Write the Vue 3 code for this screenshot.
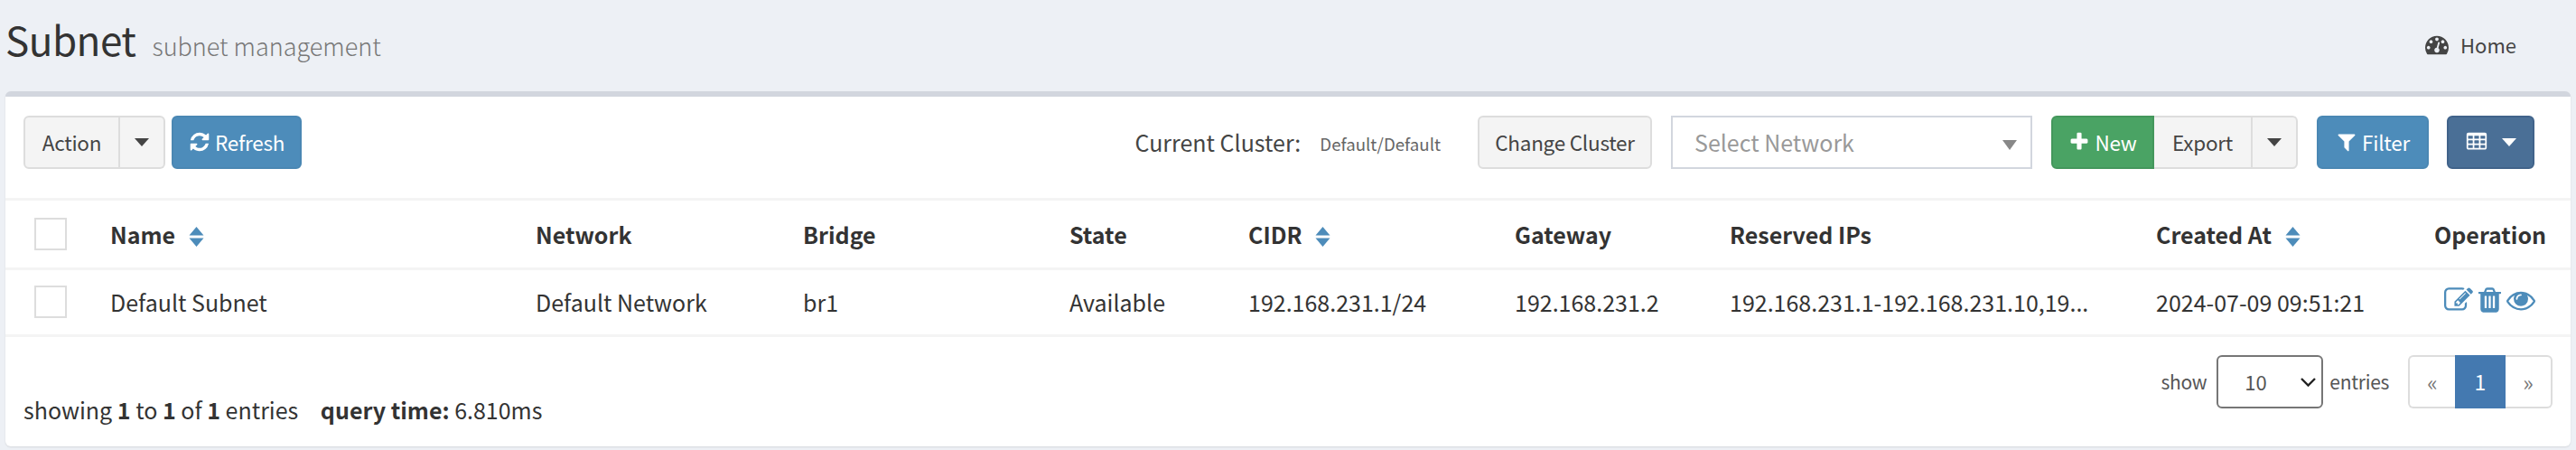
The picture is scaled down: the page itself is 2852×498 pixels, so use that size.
<script setup>
const icons = {
  refresh: 'M1639 1056q0 5-1 7-64 268-268 434.5t-478 166.5q-146 0-282.500-55t-243.500-157l-129 129q-19 19-45 19t-45-19-19-45v-448q0-26 19-45t45-19h448q26 0 45 19t19 45-19 45l-137 137q71 66 161 102t187 36q134 0 250-65t186-179q11-17 53-117 8-23 30-23h192q13 0 22.500 9.500t9.500 22.500zm25-800v448q0 26-19 45t-45 19h-448q-26 0-45-19t-19-45 19-45l138-138q-148-137-349-137-134 0-250 65t-186 179q-11 17-53 117-8 23-30 23h-199q-13 0-22.500-9.500t-9.500-22.500v-7q65-268 270-434.500t480-166.500q146 0 284 55.500t245 156.500l130-129q19-19 45-19t45 19 19 45z',
  plus: 'M1600 736v192q0 40-28 68t-68 28h-416v416q0 40-28 68t-68 28h-192q-40 0-68-28t-28-68v-416h-416q-40 0-68-28t-28-68v-192q0-40 28-68t68-28h416v-416q0-40 28-68t68-28h192q40 0 68 28t28 68v416h416q40 0 68 28t28 68z',
  filter: 'M1595 295q17 41-14 70l-493 493v742q0 42-39 59-13 5-25 5-27 0-45-19l-256-256q-19-19-19-45v-486l-493-493q-31-29-14-70 17-39 59-39h1280q42 0 59 39z',
  table: 'M576 1376v-192q0-14-9-23t-23-9h-320q-14 0-23 9t-9 23v192q0 14 9 23t23 9h320q14 0 23-9t9-23zm0-384v-192q0-14-9-23t-23-9h-320q-14 0-23 9t-9 23v192q0 14 9 23t23 9h320q14 0 23-9t9-23zm512 384v-192q0-14-9-23t-23-9h-320q-14 0-23 9t-9 23v192q0 14 9 23t23 9h320q14 0 23-9t9-23zm-512-768v-192q0-14-9-23t-23-9h-320q-14 0-23 9t-9 23v192q0 14 9 23t23 9h320q14 0 23-9t9-23zm512 384v-192q0-14-9-23t-23-9h-320q-14 0-23 9t-9 23v192q0 14 9 23t23 9h320q14 0 23-9t9-23zm512 384v-192q0-14-9-23t-23-9h-320q-14 0-23 9t-9 23v192q0 14 9 23t23 9h320q14 0 23-9t9-23zm-512-768v-192q0-14-9-23t-23-9h-320q-14 0-23 9t-9 23v192q0 14 9 23t23 9h320q14 0 23-9t9-23zm512 384v-192q0-14-9-23t-23-9h-320q-14 0-23 9t-9 23v192q0 14 9 23t23 9h320q14 0 23-9t9-23zm0-384v-192q0-14-9-23t-23-9h-320q-14 0-23 9t-9 23v192q0 14 9 23t23 9h320q14 0 23-9t9-23zm128-320v1088q0 66-47 113t-113 47h-1344q-66 0-113-47t-47-113v-1088q0-66 47-113t113-47h1344q66 0 113 47t47 113z',
  trash: 'M704 1376v-704q0-14-9-23t-23-9h-64q-14 0-23 9t-9 23v704q0 14 9 23t23 9h64q14 0 23-9t9-23zm256 0v-704q0-14-9-23t-23-9h-64q-14 0-23 9t-9 23v704q0 14 9 23t23 9h64q14 0 23-9t9-23zm256 0v-704q0-14-9-23t-23-9h-64q-14 0-23 9t-9 23v704q0 14 9 23t23 9h64q14 0 23-9t9-23zm-544-992h448l-48-117q-7-9-17-11h-317q-10 2-17 11zm928 32v64q0 14-9 23t-23 9h-96v948q0 83-47 143.500t-113 60.500h-832q-66 0-113-58.500t-47-141.500v-952h-96q-14 0-23-9t-9-23v-64q0-14 9-23t23-9h309l70-167q15-37 54-63t79-26h320q40 0 79 26t54 63l70 167h309q14 0 23 9t9 23z',
  eye: 'M1664 960q-152-236-381-353 61 104 61 225 0 185-131.500 316.500t-316.500 131.500-316.500-131.500-131.500-316.500q0-121 61-225-229 117-381 353 133 205 333.500 326.500t434.500 121.500 434.500-121.500 333.500-326.500zm-720-384q0-20-14-34t-34-14q-125 0-214.500 89.500t-89.500 214.500q0 20 14 34t34 14 34-14 14-34q0-86 61-147t147-61q20 0 34-14t14-34zm848 384q0 34-20 69-140 230-376.500 368.500t-499.500 138.500-499.500-139-376.500-368q-20-35-20-69t20-69q140-229 376.500-368t499.500-139 499.500 139 376.500 368q20 35 20 69z',
  edit: 'M888 1184l116-116-152-152-116 116v56h96v96h56zm440-720q-16-16-33 1l-350 350q-17 17-1 33t33-1l350-350q17-17 1-33zm80 594v190q0 119-84.500 203.500t-203.500 84.500h-832q-119 0-203.500-84.500t-84.500-203.500v-832q0-119 84.500-203.500t203.500-84.500h832q63 0 117 25 15 7 18 23 3 17-9 29l-49 49q-14 14-32 8-23-6-45-6h-832q-66 0-113 47t-47 113v832q0 66 47 113t113 47h832q66 0 113-47t47-113v-126q0-13 9-22l64-64q15-15 35-7t20 29zm-96-738l288 288-672 672h-288v-288zm444 132l-92 92-288-288 92-92q28-28 68-28t68 28l152 152q28 28 28 68t-28 68z',
  dashboard: 'M384 1152q0-53-37.500-90.500t-90.500-37.500-90.500 37.500-37.500 90.500 37.500 90.500 90.500 37.500 90.500-37.500 37.500-90.500zm192-448q0-53-37.500-90.500t-90.500-37.500-90.500 37.500-37.500 90.500 37.500 90.500 90.500 37.500 90.500-37.500 37.500-90.500zm428 481l101-382q6-26-7.500-48.500t-38.500-29.500-48 6.500-30 39.500l-101 382q-60 5-107 43.500t-63 98.500q-20 77 20 146t117 89 146-20 89-117q16-60-6-117t-72-91zm660-33q0-53-37.500-90.500t-90.500-37.500-90.500 37.500-37.500 90.500 37.500 90.500 90.500 37.500 90.500-37.500 37.500-90.500zm-640-640q0-53-37.500-90.500t-90.500-37.500-90.500 37.500-37.500 90.500 37.500 90.500 90.500 37.500 90.500-37.500 37.500-90.500zm448 192q0-53-37.500-90.500t-90.500-37.500-90.500 37.500-37.500 90.500 37.500 90.500 90.500 37.500 90.500-37.500 37.500-90.500zm320 448q0 261-141 483-19 29-54 29h-1402q-35 0-54-29-141-221-141-483 0-182 71-348t191-286 286-191 348-71 348 71 286 191 191 286 71 348z'
}

const columns = [
  { label: 'Name', width: 471, sort: true },
  { label: 'Network', width: 296 },
  { label: 'Bridge', width: 295 },
  { label: 'State', width: 198 },
  { label: 'CIDR', width: 295, sort: true },
  { label: 'Gateway', width: 238 },
  { label: 'Reserved IPs', width: 472 },
  { label: 'Created At', width: 308, sort: true },
  { label: 'Operation', width: 167 }
]

const rows = [
  ['Default Subnet', 'Default Network', 'br1', 'Available', '192.168.231.1/24', '192.168.231.2', '192.168.231.1-192.168.231.10,19...', '2024-07-09 09:51:21']
]
</script>

<template>
  <div class="page">
    <header class="page-head">
      <div class="titles">
        <h1>Subnet</h1>
        <small>subnet management</small>
      </div>
      <a class="crumb">
        <svg class="ico" viewBox="0 0 1792 1792" width="26" height="26"><path fill="currentColor" :d="icons.dashboard" /></svg>
        <span>Home</span>
      </a>
    </header>

    <section class="box">
      <div class="toolbar">
        <div class="group">
          <button class="btn plain w-action">Action</button>
          <button class="btn plain caret-btn"><i class="caret"></i></button>
        </div>
        <button class="btn blue w-refresh">
          <svg viewBox="0 0 1792 1792" width="24" height="24"><path fill="currentColor" :d="icons.refresh" /></svg>
          Refresh
        </button>

        <div class="cluster">
          <span class="cluster-label">Current Cluster:</span>
          <span class="cluster-value">Default/Default</span>
        </div>
        <button class="btn plain w-change">Change Cluster</button>
        <div class="net-select">
          <span>Select Network</span>
          <i class="caret grey"></i>
        </div>
        <div class="group">
          <button class="btn green w-new">
            <svg viewBox="0 0 1792 1792" width="24" height="24"><path fill="currentColor" :d="icons.plus" /></svg>
            New
          </button>
          <button class="btn plain w-export">Export</button>
          <button class="btn plain caret-btn"><i class="caret"></i></button>
        </div>
        <button class="btn blue w-filter">
          <svg viewBox="0 0 1792 1792" width="24" height="24"><path fill="currentColor" :d="icons.filter" /></svg>
          Filter
        </button>
        <button class="btn navy w-table">
          <svg viewBox="0 0 1792 1792" width="24" height="24"><path fill="currentColor" :d="icons.table" /></svg>
          <i class="caret white"></i>
        </button>
      </div>

      <table class="grid">
        <colgroup>
          <col style="width: 100px" />
          <col v-for="c in columns" :key="c.label" :style="{ width: c.width + 'px' }" />
        </colgroup>
        <thead>
          <tr>
            <th class="check-cell"><span class="check"></span></th>
            <th v-for="c in columns" :key="c.label">
              {{ c.label }}
              <svg v-if="c.sort" class="sort" viewBox="0 0 17 24" width="17" height="24">
                <path fill="#4d8cba" d="M8.500 1L16.500 10.500H.500zM.500 13.500H16.500L8.500 23z" />
              </svg>
            </th>
          </tr>
        </thead>
        <tbody>
          <tr v-for="r in rows" :key="r[0]">
            <td class="check-cell"><span class="check"></span></td>
            <td v-for="(v, i) in r" :key="i">{{ v }}</td>
            <td class="ops">
              <svg viewBox="0 0 1792 1792" width="32" height="32"><path fill="currentColor" :d="icons.edit" /></svg>
              <svg viewBox="192 0 1408 1792" width="25" height="32"><path fill="currentColor" :d="icons.trash" /></svg>
              <svg viewBox="0 0 1792 1792" width="32" height="32"><path fill="currentColor" :d="icons.eye" /></svg>
            </td>
          </tr>
        </tbody>
      </table>

      <div class="foot">
        <div class="summary">
          showing <b>1</b> to <b>1</b> of <b>1</b> entries
          <span class="query"><b>query time:</b> 6.810ms</span>
        </div>
        <div class="paging">
          <span class="muted">show</span>
          <div class="size-wrap">
            <select class="size"><option>10</option></select>
            <svg class="chevron" viewBox="0 0 17 10" width="17" height="10">
              <path d="M1 1l7.500 7.500L16 1" fill="none" stroke="#222" stroke-width="2.400" />
            </svg>
          </div>
          <span class="muted">entries</span>
          <ul class="pager">
            <li class="pg-side">«</li>
            <li class="pg-on">1</li>
            <li class="pg-side">»</li>
          </ul>
        </div>
      </div>
    </section>
  </div>
</template>

<style>
html, body {
  margin: 0;
  background: #ecf0f5;
}
</style>

<style scoped>
.page {
  width: 2852px;
  height: 498px;
  overflow: hidden;
  background: #edf0f5;
  color: #333;
  font-family: "Noto Sans CJK SC", "Noto Sans", sans-serif;
  font-size: 25px;
}

.page-head {
  height: 101px;
  display: flex;
  justify-content: space-between;
  box-sizing: border-box;
  padding: 14px 66px 0 6px;
}

.titles {
  display: flex;
  align-items: baseline;
  gap: 18px;
  height: 62px;
}

h1 {
  margin: 0;
  font-size: 44px;
  font-weight: 400;
  line-height: 58px;
  letter-spacing: -0.5px;
}

small {
  font-size: 27px;
  color: #777;
  font-weight: 300;
}

.crumb {
  display: flex;
  align-items: center;
  gap: 13px;
  height: 70px;
  font-size: 22px;
  color: #444;
}

.box {
  margin: 0 6px;
  height: 393px;
  box-sizing: border-box;
  background: #fff;
  border-top: 6px solid #d2d6de;
  border-radius: 6px;
  box-shadow: 0 1px 2px rgba(0, 0, 0, 0.1);
}

.toolbar {
  display: flex;
  align-items: center;
  height: 115px;
  box-sizing: border-box;
  padding: 20px 40px 32px 20px;
  border-bottom: 3px solid #f4f4f4;
}

.group {
  display: flex;
}

.btn {
  height: 59px;
  box-sizing: border-box;
  display: flex;
  align-items: center;
  justify-content: center;
  gap: 5px;
  padding: 0;
  font: inherit;
  font-size: 22.500px;
  letter-spacing: -0.250px;
  border: 2px solid transparent;
  border-radius: 6px;
}

.plain {
  background: #f4f4f4;
  border-color: #ddd;
  color: #444;
}

.blue {
  background: #4d8cba;
  border-color: #4a87b3;
  color: #fff;
}

.green {
  background: #4aa364;
  border-color: #44975c;
  color: #fff;
}

.navy {
  background: #4a6f96;
  border-color: #41638a;
  color: #fff;
  gap: 16px;
}

.group .btn {
  border-radius: 0;
}

.group .btn + .btn {
  border-left-width: 0;
}

.group .btn:first-child {
  border-radius: 6px 0 0 6px;
}

.group .btn:last-child {
  border-radius: 0 6px 6px 0;
}

.w-action { width: 107px; }
.caret-btn { width: 50px; }
.w-refresh { width: 144px; margin-left: 7px; }
.w-change { width: 193px; margin-left: 41px; }
.w-new { width: 114px; }
.w-export { width: 109px; }
.w-filter { width: 124px; margin-left: 21px; }
.w-table { width: 97px; margin-left: 20px; }

.caret {
  display: inline-block;
  width: 0;
  height: 0;
  border-top: 9px solid #444;
  border-left: 8px solid transparent;
  border-right: 8px solid transparent;
}

.caret.white { border-top-color: #fff; }
.caret.grey { border-top-color: #888; border-top-width: 11px; border-left-width: 8px; border-right-width: 8px; }

.cluster {
  margin-left: auto;
  display: flex;
  align-items: center;
  gap: 21px;
}

.cluster-label {
  font-size: 25px;
  color: #444;
}

.cluster-value {
  font-size: 18.700px;
  color: #666;
  padding-top: 3px;
}

.net-select {
  width: 400px;
  height: 59px;
  margin: 0 21px;
  box-sizing: border-box;
  border: 2px solid #d2d6de;
  padding: 0 24px;
  display: flex;
  align-items: center;
  justify-content: space-between;
  color: #999;
  font-size: 25px;
  background: #fff;
}

.net-select .caret {
  margin-right: -9px;
  margin-top: 6px;
}

.grid {
  width: 2840px;
  table-layout: fixed;
  border-collapse: collapse;
}

th,
td {
  box-sizing: border-box;
  padding: 0 16px;
  text-align: left;
  white-space: nowrap;
  overflow: hidden;
  border-bottom: 3px solid #f4f4f4;
  color: #333;
  font-size: 25px;
}

thead tr { height: 75px; }
tbody tr { height: 74px; }

th { font-weight: 700; }

.sort {
  margin-left: 9px;
  vertical-align: -4px;
}

.check-cell {
  padding: 0 0 0 32px;
}

.check {
  display: block;
  width: 36px;
  height: 36px;
  box-sizing: border-box;
  border: 2px solid #ddd;
}

td.ops {
  color: #4d8cba;
  padding: 0 0 4px 27px;
  font-size: 0;
}

.ops svg {
  display: inline-block;
  vertical-align: middle;
  margin-right: 6px;
}

.foot {
  display: flex;
  justify-content: space-between;
  align-items: flex-start;
  padding: 20px 20px 0 20px;
}

.summary {
  padding-top: 40px;
  font-size: 25px;
  line-height: 40px;
}

.query {
  margin-left: 19px;
}

.paging {
  display: flex;
  align-items: center;
  height: 59px;
}

.muted {
  font-size: 21px;
  letter-spacing: -0.300px;
  color: #555;
}

.size-wrap {
  position: relative;
  width: 118px;
  height: 59px;
  margin: 0 7px 0 11px;
}

.size {
  appearance: none;
  width: 118px;
  height: 59px;
  padding-left: 29px;
  border: 2px solid #767676;
  border-radius: 6px;
  background: #fff;
  font: inherit;
  font-size: 22px;
  color: #555;
}

.chevron {
  position: absolute;
  left: 93px;
  top: 25px;
  pointer-events: none;
}

.pager {
  display: flex;
  list-style: none;
  margin: 0 0 0 21px;
  padding: 0;
  height: 59px;
}

.pager li {
  display: flex;
  align-items: center;
  justify-content: center;
  box-sizing: border-box;
}

.pg-side {
  width: 52px;
  border: 2px solid #ddd;
  color: #777;
  font-size: 24px;
}

.pg-side:first-child {
  border-right: 0;
  border-radius: 6px 0 0 6px;
}

.pg-side:last-child {
  border-left: 0;
  border-radius: 0 6px 6px 0;
}

.pg-on {
  width: 56px;
  background: #4479b0;
  color: #fff;
  font-size: 23px;
}
</style>
